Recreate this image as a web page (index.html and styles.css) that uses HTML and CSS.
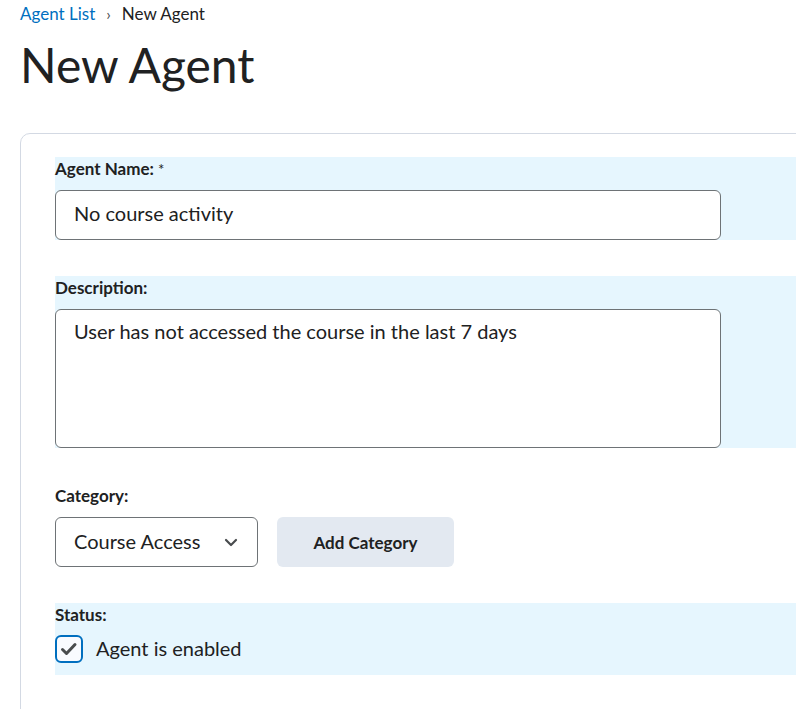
FILE: index.html
```
<!DOCTYPE html>
<html lang="en">
<head>
    <meta charset="UTF-8">
    <meta name="viewport" content="width=device-width, initial-scale=1.0">
    <title>New Agent</title>
    <link rel="stylesheet" href="styles.css">
</head>
<body>

    <!-- Breadcrumb -->
    <nav class="breadcrumb">
        <a href="#">Agent List</a>
        <span class="crumb-sep">&#8250;</span>
        <span>New Agent</span>
    </nav>

    <h1 class="page-title">New Agent</h1>

    <div class="card">
        <!-- Agent name -->
        <div class="field highlight">
            <label for="agentName">Agent Name: <span class="req">*</span></label>
            <input type="text" id="agentName" class="text-input" value="No course activity">
        </div>

        <!-- Description -->
        <div class="field highlight">
            <label for="agentDesc">Description:</label>
            <textarea id="agentDesc" class="text-input text-area">User has not accessed the course in the last 7 days</textarea>
        </div>

        <!-- Category -->
        <div class="field">
            <label for="agentCategory">Category:</label>
            <div class="category-row">
                <div class="select-box" id="agentCategory">
                    <span class="select-value">Course Access</span>
                    <svg class="chevron" width="14" height="9" viewBox="0 0 14 9">
                        <path d="M2 2 L7 7 L12 2" fill="none" stroke="#494c4e" stroke-width="2.2" stroke-linecap="round" stroke-linejoin="round"/>
                    </svg>
                </div>
                <button type="button" class="btn-secondary">Add Category</button>
            </div>
        </div>

        <!-- Status -->
        <div class="field highlight status">
            <label>Status:</label>
            <div class="check-row">
                <span class="checkbox">
                    <svg width="18" height="16" viewBox="0 0 18 16">
                        <path d="M2.5 8.5 L6.5 12.5 L15 3.5" fill="none" stroke="#494c4e" stroke-width="3" stroke-linecap="round" stroke-linejoin="round"/>
                    </svg>
                </span>
                <span class="check-label">Agent is enabled</span>
            </div>
        </div>
    </div>

</body>
</html>
```

FILE: styles.css
```
body {
    margin: 0;
    padding: 0 0 0 20px;
    font-family: Lato, "Open Sans", Arial, sans-serif;
    color: #202122;
    background: #fff;
    overflow: hidden;
    height: 709px;
}

/* Breadcrumb */
.breadcrumb {
    font-size: 17px;
    line-height: 20px;
    padding-top: 4px;
    display: flex;
    align-items: center;
    gap: 9px;
}

.breadcrumb a {
    color: #006fbf;
    text-decoration: none;
}

.crumb-sep {
    font-size: 16px;
    color: #494c4e;
    padding: 0 2px;
}

.page-title {
    font-size: 48px;
    font-weight: 400;
    line-height: 56px;
    margin: 13px 0 0 0;
}

/* Form card */
.card {
    margin-top: 40px;
    width: 820px;
    min-height: 620px;
    border: 1px solid #d3d9e3;
    border-radius: 10px;
    padding: 23px 0 0 34px;
    box-sizing: border-box;
}

.field {
    margin-bottom: 36px;
}

.highlight {
    background: #e6f6fe;
}

.field label {
    display: block;
    font-size: 17px;
    font-weight: 700;
    line-height: 24px;
    margin-bottom: 9px;
}

.req {
    font-weight: 400;
    font-size: 15px;
}

.text-input {
    display: block;
    width: 666px;
    height: 50px;
    box-sizing: border-box;
    border: 1px solid #6e7376;
    border-radius: 6px;
    padding: 0 18px 5px 18px;
    font-family: inherit;
    font-size: 20px;
    color: #202122;
    background: #fff;
    outline: none;
}

.text-area {
    height: 139px;
    padding-top: 9px;
    line-height: 24px;
    resize: none;
}

/* Category row */
.category-row {
    display: flex;
    gap: 19px;
}

.select-box {
    width: 203px;
    height: 50px;
    box-sizing: border-box;
    border: 1px solid #6e7376;
    border-radius: 6px;
    padding: 0 19px 0 18px;
    display: flex;
    align-items: center;
    justify-content: space-between;
    font-size: 20px;
}

.select-value {
    padding-bottom: 3px;
}

.btn-secondary {
    width: 177px;
    height: 50px;
    border: none;
    border-radius: 6px;
    background: #e3e9f1;
    font-family: inherit;
    font-size: 17px;
    font-weight: 700;
    color: #202122;
    cursor: pointer;
}

/* Status */
.status {
    padding-bottom: 12px;
}

.check-row {
    display: flex;
    align-items: center;
    gap: 13px;
    margin-top: -1px;
}

.checkbox {
    width: 28px;
    height: 28px;
    box-sizing: border-box;
    border: 2px solid #006fbf;
    border-radius: 6px;
    background: #f9fbff;
    display: flex;
    align-items: center;
    justify-content: center;
}

.check-label {
    font-size: 20px;
    padding-bottom: 3px;
}
```
